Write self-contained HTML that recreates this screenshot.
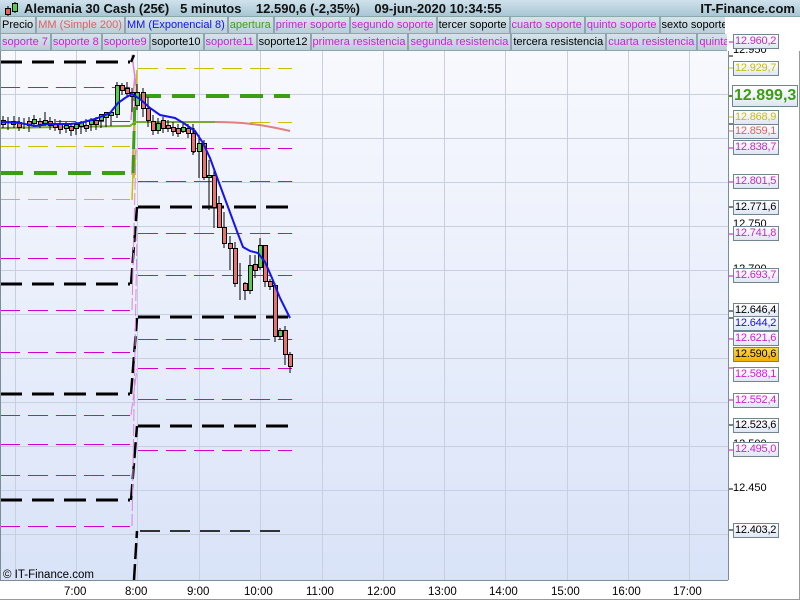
<!DOCTYPE html>
<html><head><meta charset="utf-8"><style>
*{margin:0;padding:0;box-sizing:border-box}
body{width:800px;height:600px;overflow:hidden;background:#fff;font-family:"Liberation Sans",sans-serif;position:relative}
.hdr{position:absolute;left:0;top:0;width:800px;height:17px;background:linear-gradient(#cfe2ec,#a9c6d4);border-bottom:1px solid #8aa;font-size:13px;font-weight:bold;color:#111}
.row{position:absolute;left:0;height:17px;display:flex;font-size:11px;white-space:nowrap;overflow:hidden}
.row span{background:linear-gradient(#d6e4ea,#b9ced8);border:1px solid #8fa4ae;border-top:none;padding:0 2px 0 1px;line-height:16px;height:17px}
.m{color:#d020d0}.k{color:#000}
.lab{position:absolute;left:733px;width:46px;height:15px;border:1px solid #6f8590;background:linear-gradient(#fff,#dfe6f4);font-size:11px;line-height:13px;padding-left:1px;letter-spacing:-0.2px;white-space:nowrap;overflow:hidden}
.tk{position:absolute;left:733px;font-size:11px;color:#000}
.tm{position:absolute;top:586px;font-size:11.5px;color:#000}
</style></head><body>
<div class="hdr">
<svg style="position:absolute;left:3px;top:1px" width="16" height="16"><line x1="5" y1="5" x2="5" y2="15" stroke="#000"/><rect x="2.5" y="7.5" width="5" height="6" fill="#e86060" stroke="#000"/><line x1="12" y1="1" x2="12" y2="12" stroke="#000"/><rect x="9.5" y="2.5" width="5" height="8" fill="#50d050" stroke="#000"/></svg>
<span style="position:absolute;left:24px;top:1px">Alemania 30 Cash (25€)&nbsp;&nbsp; 5 minutos&nbsp;&nbsp;&nbsp; 12.590,6 (-2,35%)&nbsp;&nbsp;&nbsp; 09-jun-2020 10:34:55</span>
<span style="position:absolute;right:5px;top:1px">IT-Finance.com</span>
</div>
<div class="row" style="top:17px;width:725px"><span class="k">Precio</span><span style="color:#e06060">MM (Simple 200)</span><span style="color:#1010ff">MM (Exponencial 8)</span><span style="color:#40a010">apertura</span><span class="m">primer soporte</span><span class="m">segundo soporte</span><span class="k">tercer soporte</span><span class="m">cuarto soporte</span><span class="m">quinto soporte</span><span class="k">sexto soporte</span></div>
<div class="row" style="top:34px;width:727px"><span class="m">soporte 7</span><span class="m">soporte 8</span><span class="m">soporte9</span><span class="k">soporte10</span><span class="m">soporte11</span><span class="k">soporte12</span><span class="m">primera resistencia</span><span class="m">segunda resistencia</span><span class="k">tercera resistencia</span><span class="m">cuarta resistencia</span><span class="m">quinta resistencia</span></div>
<svg style="position:absolute;left:0;top:0" width="800" height="600">
<defs><linearGradient id="bg" x1="0" y1="0" x2="0" y2="1"><stop offset="0" stop-color="#f8f9fe"/><stop offset="1" stop-color="#d9e3f8"/></linearGradient></defs>
<rect x="0" y="51" width="728" height="529" fill="url(#bg)"/>
<g stroke="#c8d0e0" stroke-width="1">
<path d="M15.5 51V580M76.5 51V580M137.5 51V580M199.5 51V580M260.5 51V580M322.5 51V580M383.5 51V580M444.5 51V580M505.5 51V580M567.5 51V580M628.5 51V580M689.5 51V580"/>
<path d="M0 94.5H728M0 138.5H728M0 182.5H728M0 226.5H728M0 270.5H728M0 314.5H728M0 358.5H728M0 402.5H728M0 446.5H728M0 490.5H728M0 534.5H728"/>
</g>
<g fill="none">
<g stroke="#000" stroke-width="3" stroke-dasharray="22,10"><path d="M0 62H130M0 284H130M0 394H130M0 500H130"/></g>
<g stroke="#d000d0" stroke-width="1" stroke-dasharray="20,8"><path d="M0 87.5H130M0 121.5H130M0 226.5H130M0 258.5H130M0 310.5H130M0 352.5H130M0 415.5H130M0 444.5H130M0 475.5H130M0 526.5H130"/></g>
<g stroke="#c8c000" stroke-width="1" stroke-dasharray="20,8"><path d="M0 146.5H130M0 199.5H130"/></g>
<path d="M0 173H130" stroke="#3c9e10" stroke-width="4" stroke-dasharray="23,11"/>
<path d="M132 55L136 86M131 120L135 74M132 175L135 98" stroke="#e080e0" stroke-width="1.5"/>
<path d="M134 178L136 150M132 200L137 70" stroke="#c8c000" stroke-width="1.5"/>
<path d="M133 173L135 95" stroke="#3c9e10" stroke-width="3" stroke-dasharray="18,6"/>
<path d="M131 62L134 55M131 284L137 207M131 394L137 318M131 500L137 426M134 580L137 531" stroke="#000" stroke-width="2.5" stroke-dasharray="16,5"/>
<path d="M132 310L136 148M131 415L137 369M132 526L137 233" stroke="#e080e0" stroke-width="1" stroke-dasharray="12,3"/>
<g stroke="#c8c000" stroke-width="1" stroke-dasharray="20,8"><path d="M138 68.5H292M138 122.5H292"/></g>
<path d="M138 96H290" stroke="#3c9e10" stroke-width="4" stroke-dasharray="23,11"/>
<g stroke="#d000d0" stroke-width="1" stroke-dasharray="20,8"><path d="M138 148.5H292M138 181.5H292M138 233.5H292M138 275.5H292M138 339.5H292M138 368.5H292M138 399.5H292M138 450.5H292"/></g>
<g stroke="#000" stroke-width="3" stroke-dasharray="22,10"><path d="M138 207H292M138 317H292M138 426H292"/></g>
<path d="M140 531H290" stroke="#333" stroke-width="2" stroke-dasharray="20,10"/>
<path d="M0 128L60 127L130 126L135 122L215 122" stroke="#7aa830" stroke-width="2"/>
<path d="M215 122C240 122 260 124 290 131" stroke="#e08080" stroke-width="2"/>
</g>
<g stroke="#000" stroke-width="1">
<path d="M3 116V128M8 117V130M14 116V128M19 117V131M24 118V129M29 117V132M34 115V127M40 118V128M45 112V126M50 117V130M55 119V131M60 120V134M66 122V133M71 123V136M76 122V135M81 121V134M86 119V132M91 118V131M96 117V130M101 116V128M106 113V127M111 113V126M117 82V118M122 83V95M127 82V97M132 88V112M137 84V110M143 88V117M148 97V127M153 115V135M158 118V134M163 117V133M168 120V132M173 122V136M178 124V137M183 124V133M188 124V138M193 124V155M194 128V153M199 135V178M204 140V180M209 160V210M214 170V228M219 196V227M224 212V248M230 236V270M235 242V287M240 263V300M245 282V300M250 255V294M255 255V278M260 238V270M265 245V287M270 279V290M275 283V342M280 328V340M285 326V365M290 352V373"/>
</g>
<g stroke="#000" stroke-width="1">
<g fill="#e87070">
<rect x="1.5" y="120.5" width="4" height="4"/><rect x="11.5" y="121.5" width="4" height="3"/><rect x="17.5" y="122.5" width="4" height="5"/><rect x="27.5" y="121.5" width="4" height="4"/><rect x="38.5" y="121.5" width="4" height="3"/><rect x="48.5" y="121.5" width="4" height="4"/><rect x="53.5" y="123.5" width="4" height="4"/><rect x="58.5" y="124.5" width="4" height="5"/><rect x="69.5" y="126.5" width="4" height="4"/><rect x="84.5" y="125.5" width="4" height="3"/><rect x="94.5" y="120.5" width="4" height="4"/><rect x="120.5" y="85.5" width="4" height="5"/><rect x="125.5" y="88.5" width="4" height="5"/><rect x="130.5" y="92.5" width="4" height="4"/><rect x="141.5" y="92.5" width="4" height="16"/><rect x="146.5" y="108.5" width="4" height="12"/><rect x="151.5" y="121.5" width="4" height="9"/><rect x="161.5" y="120.5" width="4" height="8"/><rect x="166.5" y="125.5" width="4" height="3"/><rect x="171.5" y="127.5" width="4" height="4"/><rect x="176.5" y="128.5" width="4" height="5"/><rect x="186.5" y="128.5" width="4" height="5"/><rect x="191.5" y="133.5" width="4" height="18"/><rect x="202.5" y="143.5" width="4" height="34"/><rect x="212.5" y="175.5" width="4" height="32"/><rect x="217.5" y="203.5" width="4" height="24"/><rect x="222.5" y="227.5" width="4" height="16"/><rect x="228.5" y="243.5" width="4" height="5"/><rect x="233.5" y="248.5" width="4" height="35"/><rect x="243.5" y="283.5" width="4" height="7"/><rect x="253.5" y="264.5" width="4" height="6"/><rect x="263.5" y="245.5" width="4" height="36"/><rect x="268.5" y="281.5" width="4" height="5"/><rect x="273.5" y="285.5" width="4" height="51"/><rect x="283.5" y="330.5" width="4" height="24"/><rect x="288.5" y="354.5" width="4" height="12"/>
</g>
<g fill="#50d050">
<rect x="32.5" y="119.5" width="4" height="4"/><rect x="43.5" y="120.5" width="4" height="3"/><rect x="64.5" y="125.5" width="4" height="3"/><rect x="74.5" y="124.5" width="4" height="4"/><rect x="79.5" y="122.5" width="4" height="4"/><rect x="89.5" y="120.5" width="4" height="4"/><rect x="99.5" y="114.5" width="4" height="6"/><rect x="104.5" y="112.5" width="4" height="5"/><rect x="109.5" y="112.5" width="4" height="3"/><rect x="115.5" y="85.5" width="4" height="29"/><rect x="135.5" y="92.5" width="4" height="13"/><rect x="156.5" y="123.5" width="4" height="7"/><rect x="181.5" y="127.5" width="4" height="4"/><rect x="197.5" y="143.5" width="4" height="8"/><rect x="207.5" y="175.5" width="4" height="2"/><rect x="248.5" y="265.5" width="4" height="25"/><rect x="258.5" y="245.5" width="4" height="22"/><rect x="278.5" y="330.5" width="4" height="6"/>
</g>
</g>
<path d="M0 122L20 123L35 126L50 124L70 124L80 123L95 119L110 113L118 103L125 98L132 94L140 99L150 108L160 115L175 118L185 124L195 131L203 143L210 158L218 180L228 207L238 234L243 247L250 251L258 253L265 262L272 278L280 298L290 318" fill="none" stroke="#1414f0" stroke-width="2"/>
<line x1="728.5" y1="51" x2="728.5" y2="580" stroke="#7a8e98"/>
<line x1="0" y1="580.5" x2="728" y2="580.5" stroke="#7a8e98"/>
<line x1="0.5" y1="51" x2="0.5" y2="580" stroke="#7a8e98"/>
<line x1="799.5" y1="51" x2="799.5" y2="600" stroke="#999"/>
<line x1="0" y1="599.5" x2="800" y2="599.5" stroke="#999"/>
<g stroke="#000"><path d="M729 56H733M729 124H733M729 207H733M729 311H733M729 318H733M729 425H733M729 489H733M729 530H733"/></g>
<g stroke="#d000d0"><path d="M729 42H733M729 148H733M729 182H733M729 234H733M729 276H733M729 339H733M729 368H733M729 400H733M729 450H733"/></g>
<path d="M729 68H733M729 117H733" stroke="#c8c000"/><path d="M729 131H733" stroke="#e06060"/><path d="M729 96H733" stroke="#3c9e10" stroke-width="2"/>
<text x="3" y="578" font-size="11.5" font-family="Liberation Sans" fill="#000">© IT-Finance.com</text>
</svg>
<div class="tk" style="top:44px">12.950</div>
<div class="tk" style="top:218px">12.750</div>
<div class="tk" style="top:263px">12.700</div>
<div class="tk" style="top:438px">12.500</div>
<div class="tk" style="top:482px">12.450</div>
<div class="lab m" style="top:34px">12.960,2</div>
<div class="lab" style="top:61px;color:#c8c000">12.929,7</div>
<div class="lab" style="top:85px;left:732px;width:66px;height:22px;font-size:16px;line-height:20px;font-weight:bold;color:#3c9e10;letter-spacing:0">12.899,3</div>
<div class="lab" style="top:110px;color:#c8c000">12.868,9</div>
<div class="lab" style="top:124px;color:#e06060">12.859,1</div>
<div class="lab m" style="top:140px">12.838,7</div>
<div class="lab m" style="top:174px">12.801,5</div>
<div class="lab" style="top:200px">12.771,6</div>
<div class="lab m" style="top:226px">12.741,8</div>
<div class="lab m" style="top:268px">12.693,7</div>
<div class="lab" style="top:303px">12.646,4</div>
<div class="lab" style="top:316px;color:#1010ff">12.644,2</div>
<div class="lab m" style="top:331px">12.621,6</div>
<div class="lab" style="top:347px;background:linear-gradient(#ffd840,#f0b000)">12.590,6</div>
<div class="lab m" style="top:367px">12.588,1</div>
<div class="lab m" style="top:393px">12.552,4</div>
<div class="lab" style="top:418px">12.523,6</div>
<div class="lab m" style="top:442px">12.495,0</div>
<div class="lab" style="top:523px">12.403,2</div>
<div class="tm" style="left:64px">7:00</div><div class="tm" style="left:125px">8:00</div><div class="tm" style="left:187px">9:00</div><div class="tm" style="left:244px">10:00</div><div class="tm" style="left:306px">11:00</div><div class="tm" style="left:367px">12:00</div><div class="tm" style="left:428px">13:00</div><div class="tm" style="left:489px">14:00</div><div class="tm" style="left:551px">15:00</div><div class="tm" style="left:612px">16:00</div><div class="tm" style="left:673px">17:00</div>
</body></html>
